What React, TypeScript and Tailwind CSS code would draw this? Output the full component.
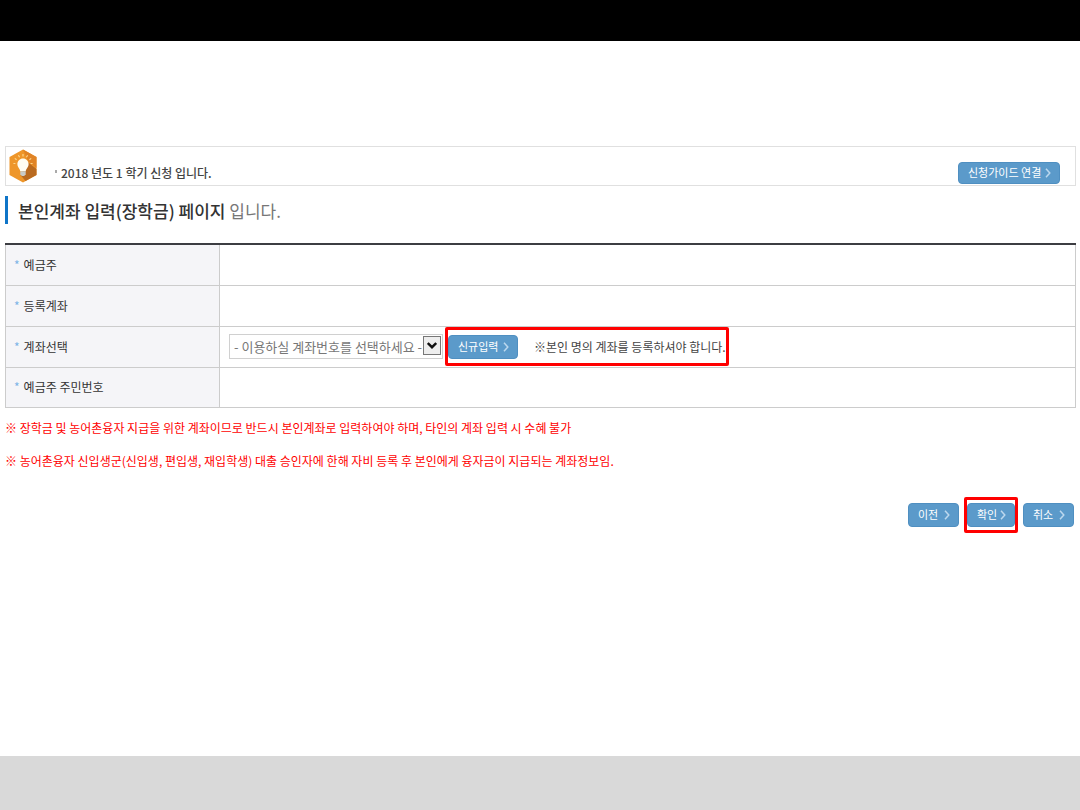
import type { ReactNode } from 'react';

function Chevron() {
  return (
    <svg viewBox="0 0 6 10" className="h-[10px] w-[6px] shrink-0" fill="none" stroke="#bcd8ee" strokeWidth="1.5" aria-hidden="true">
      <path d="M1 0.8 L4.8 5 L1 9.2" />
    </svg>
  );
}

function BlueButton({ children, className }: { children: ReactNode; className: string }) {
  return (
    <button
      type="button"
      className={`flex items-center justify-between rounded-[4px] border border-[#4f8fc1] bg-[#5b9aca] pr-2 pl-[9px] text-[11px] leading-none whitespace-nowrap text-white ${className}`}
    >
      {children}
      <Chevron />
    </button>
  );
}

function BulbBadge() {
  return (
    <svg viewBox="0 0 28 34" className="h-[34px] w-[28px] shrink-0" aria-hidden="true">
      <path d="M14 0.5 L27.5 8 V26 L14 33.5 L0.5 26 V8 Z" fill="#ee962a" />
      <path d="M14 0.5 L27.5 8 V19 L19 12 Z" fill="#e08426" />
      <path d="M19.3 13.5 L27.5 20 V26 L16.5 32.1 L11.5 26 Z" fill="#b96a20" />
      <path d="M14 9.5 C10.8 9.5 8.4 12 8.4 15 C8.4 18.4 11.1 19.6 11.2 22.3 H16.8 C16.9 19.6 19.6 18.4 19.6 15 C19.6 12 17.2 9.5 14 9.5 Z" fill="#fffdf2" />
      <path d="M11.3 22.3 H16.7 V25.2 L15.2 27 H12.8 L11.3 25.2 Z" fill="#c9cbc8" />
      <path d="M14 5 V7.4 M9.4 6.2 L10.6 8.2 M18.6 6.2 L17.4 8.2 M5.8 9.4 L7.6 10.8 M22.2 9.4 L20.4 10.8 M4.4 14.5 H6.4 M23.6 14.5 H21.6" stroke="#fbd58c" strokeWidth="1.2" />
    </svg>
  );
}

function Row({ label, children }: { label: string; children?: ReactNode }) {
  return (
    <tr className="h-[41px] border-b border-[#cccccc] last:h-10">
      <th scope="row" className="border-x border-[#cccccc] bg-[#f5f5f8] p-0 pl-2 text-left font-normal">
        <span className="mr-1 text-[#7db4e6]">*</span>
        {label}
      </th>
      <td className="border-r border-[#cccccc] p-0 pl-[9px]">{children}</td>
    </tr>
  );
}

export default function App() {
  return (
    <div className="flex min-h-screen flex-col bg-white font-['Noto_Sans_CJK_KR','Noto_Sans',sans-serif] text-[12px] leading-[18px] text-[#333333]">
      <header className="h-[41px] bg-black" />
      <main className="flex-1 pt-[105px] pr-1 pl-[5px]">
        <section className="flex h-10 items-center border border-[#e0e0e0] pr-[15px] pl-[3px]">
          <BulbBadge />
          <div className="ml-[18px] flex flex-1 items-center gap-1 pt-[14px]">
            <span className="mb-1 h-[3px] w-[2px] bg-[#aaaaaa]" />
            <p className="font-medium text-[#444444]">2018 년도 1 학기 신청 입니다.</p>
          </div>
          <div className="pt-[13px]">
            <BlueButton className="h-[22px] w-[102px]">신청가이드 연결</BlueButton>
          </div>
        </section>

        <h1 className="mt-[10px] flex h-7 items-center border-l-3 border-[#0f75c8] pt-[2px] pl-[10px] text-[17px] font-medium whitespace-pre text-[#333333]">
          본인계좌 입력(장학금) 페이지<span className="font-normal text-[#777777]"> 입니다.</span>
        </h1>

        <table className="mt-[19px] w-full table-fixed border-collapse border-t-2 border-[#3c3d42]">
          <colgroup>
            <col className="w-1/5" />
            <col />
          </colgroup>
          <tbody>
            <Row label="예금주" />
            <Row label="등록계좌" />
            <Row label="계좌선택">
              <div className="flex items-center">
                <div className="relative h-[25px] w-[214px]">
                  <select
                    aria-label="계좌선택"
                    className="h-full w-full appearance-none border border-[#d0d0d0] bg-white pl-1 text-[13px] font-normal text-[#777777]"
                  >
                    <option>- 이용하실 계좌번호를 선택하세요 -</option>
                  </select>
                  <span className="pointer-events-none absolute top-[2px] right-[2px] flex h-[19px] w-[18px] items-center justify-center border border-[#777777] bg-[#eeeeee]">
                    <svg viewBox="0 0 10 7" className="h-[7px] w-[10px]" fill="none" stroke="#111111" strokeWidth="2.4" aria-hidden="true">
                      <path d="M0.8 1 L5 5.2 L9.2 1" />
                    </svg>
                  </span>
                </div>
                <div className="ml-[2px] flex h-[39px] w-[284px] items-center rounded-[2px] border-3 border-[#ff0000]">
                  <BlueButton className="h-6 w-[70px]">신규입력</BlueButton>
                  <span className="ml-4 whitespace-nowrap text-[#444444]">※본인 명의 계좌를 등록하셔야 합니다.</span>
                </div>
              </div>
            </Row>
            <Row label="예금주 주민번호" />
          </tbody>
        </table>

        <div className="mt-[11px] flex flex-col gap-[15px] text-[#ff0000]">
          <p>※ 장학금 및 농어촌융자 지급을 위한 계좌이므로 반드시 본인계좌로 입력하여야 하며, 타인의 계좌 입력 시 수혜 불가</p>
          <p>※ 농어촌융자 신입생군(신입생, 편입생, 재입학생) 대출 승인자에 한해 자비 등록 후 본인에게 융자금이 지급되는 계좌정보임.</p>
        </div>

        <div className="mt-[27px] flex items-center justify-end gap-[5px] pr-[2px]">
          <BlueButton className="h-6 w-[51px]">이전</BlueButton>
          <div className="rounded-[2px] border-3 border-[#ff0000] py-[3px]">
            <BlueButton className="h-6 w-12">확인</BlueButton>
          </div>
          <BlueButton className="h-6 w-[51px]">취소</BlueButton>
        </div>
      </main>
      <footer className="h-[54px] bg-[#d9d9d9]" />
    </div>
  );
}
